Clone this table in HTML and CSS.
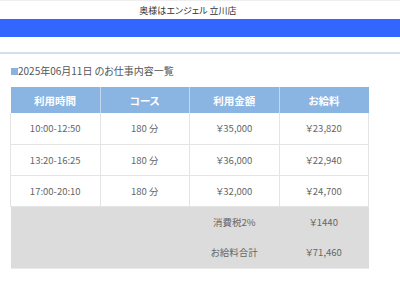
FILE: index.html
```html
<!DOCTYPE html>
<html lang="ja">
<head>
<meta charset="utf-8">
<link rel="stylesheet" href="styles.css">
</head>
<body>
<div class="topbar"><span class="shop">奥様はエンジェル 立川店</span></div>
<div class="band"></div>
<div class="subbar"></div>
<main class="content">
  <h2 class="heading"><span class="sq"></span>2025年06月11日 のお仕事内容一覧</h2>
  <table class="pay">
    <thead>
      <tr><th>利用時間</th><th>コース</th><th>利用金額</th><th>お給料</th></tr>
    </thead>
    <tbody>
      <tr><td>10:00-12:50</td><td>180 分</td><td>￥35,000</td><td>￥23,820</td></tr>
      <tr><td>13:20-16:25</td><td>180 分</td><td>￥36,000</td><td>￥22,940</td></tr>
      <tr><td>17:00-20:10</td><td>180 分</td><td>￥32,000</td><td>￥24,700</td></tr>
    </tbody>
    <tfoot>
      <tr><td colspan="2"></td><td>消費税2%</td><td>￥1440</td></tr>
      <tr><td colspan="2"></td><td>お給料合計</td><td>￥71,460</td></tr>
    </tfoot>
  </table>
</main>
</body>
</html>
```
FILE: styles.css
```css
html, body {
  margin: 0;
  padding: 0;
  background: #fff;
}
body {
  font-family: "Noto Sans CJK JP", "Noto Sans", sans-serif;
  color: #444;
  font-feature-settings: "palt";
}
.topbar {
  height: 19px;
  border-top: 1px solid #eee;
  box-sizing: border-box;
  display: flex;
  align-items: center;
  justify-content: center;
  padding-right: 24px;
  font-size: 9px;
  color: #333;
}
.band {
  height: 18px;
  background: #3366ff;
}
.subbar {
  height: 15px;
  border-bottom: 2px solid #d3dfea;
}
.content {
  padding: 0 10px;
}
.heading {
  margin: 0;
  padding-top: 11px;
  height: 23px;
  box-sizing: border-box;
  font-size: 10px;
  font-weight: normal;
  color: #555;
  display: flex;
  align-items: center;
  line-height: 1;
}
.sq {
  width: 7px;
  height: 7px;
  margin-left: 1px;
  background: #8ab2e0;
}
.pay {
  margin-top: 10px;
  width: 359px;
  border-collapse: collapse;
  table-layout: fixed;
  font-size: 9.5px;
  color: #666;
}
.pay th, .pay td {
  text-align: center;
  padding: 0;
  box-sizing: border-box;
}
.pay th {
  height: 26px;
  background: #8ab4e2;
  color: #fff;
  font-weight: bold;
  font-size: 10.5px;
  border-left: 1px solid #c4d8ee;
}
.pay th:first-child {
  border-left: none;
}
.pay tbody td {
  height: 31px;
  border: 1px solid #e4e4e4;
  background: #fff;
}
.pay tbody tr:first-child td {
  border-top: none;
}
.pay tfoot td {
  height: 31px;
  background: #dcdcdc;
  color: #666;
}
.pay tfoot tr:last-child td {
  border-bottom: 1px solid #eaeaea;
}
```
